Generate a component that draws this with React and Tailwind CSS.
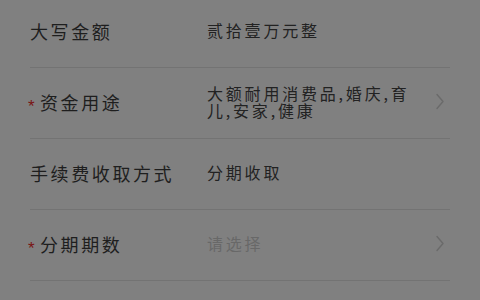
const rows = [
    { label: "大写金额", value: ["贰拾壹万元整"] },
    { label: "资金用途", required: true, value: ["大额耐用消费品,婚庆,育", "儿,安家,健康"], arrow: true },
    { label: "手续费收取方式", value: ["分期收取"] },
    { label: "分期期数", required: true, placeholder: "请选择", arrow: true },
    { label: "", value: [] },
];

function Chevron() {
    return (
        <svg width="10" height="17" viewBox="0 0 10 17" className="shrink-0">
            <path d="M2 1.5 L8 8.5 L2 15.5" fill="none" stroke="#6a6a6a" strokeWidth="1.4" strokeLinecap="round" strokeLinejoin="round" />
        </svg>
    );
}

export default function App() {
    return (
        <div
            className="w-[480px] h-[300px] overflow-hidden bg-[#808080]"
            style={{ fontFamily: '"Noto Sans CJK SC", "Noto Sans", sans-serif' }}
        >
            <div className="px-[30px] -mt-[3px]">
                {rows.map((row, i) => (
                    <div key={i} className="flex items-center h-[71px] pb-[3px] border-b border-[#737373] box-border">
                        <div className="relative w-[177px] shrink-0 text-[18px] tracking-[2.6px] text-[#1e1e1e] leading-none">
                            {row.required && (
                                <span
                                    className="absolute -left-[2px] top-[5px] text-[17px] leading-none text-[#7a1414]"
                                    style={{ fontFamily: '"Liberation Sans", sans-serif' }}
                                >
                                    *
                                </span>
                            )}
                            <span className={row.required ? "pl-[10px]" : ""}>{row.label}</span>
                        </div>
                        <div className="flex-1 flex items-center pr-[5px]">
                            <div className="flex-1 text-[16px] tracking-[2.8px] leading-[17px]">
                                {row.placeholder ? (
                                    <span className="text-[#686868]">{row.placeholder}</span>
                                ) : (
                                    row.value.map((line, j) => (
                                        <div key={j} className="text-[#222222] whitespace-nowrap">{line}</div>
                                    ))
                                )}
                            </div>
                            {row.arrow && <Chevron />}
                        </div>
                    </div>
                ))}
            </div>
        </div>
    );
}
